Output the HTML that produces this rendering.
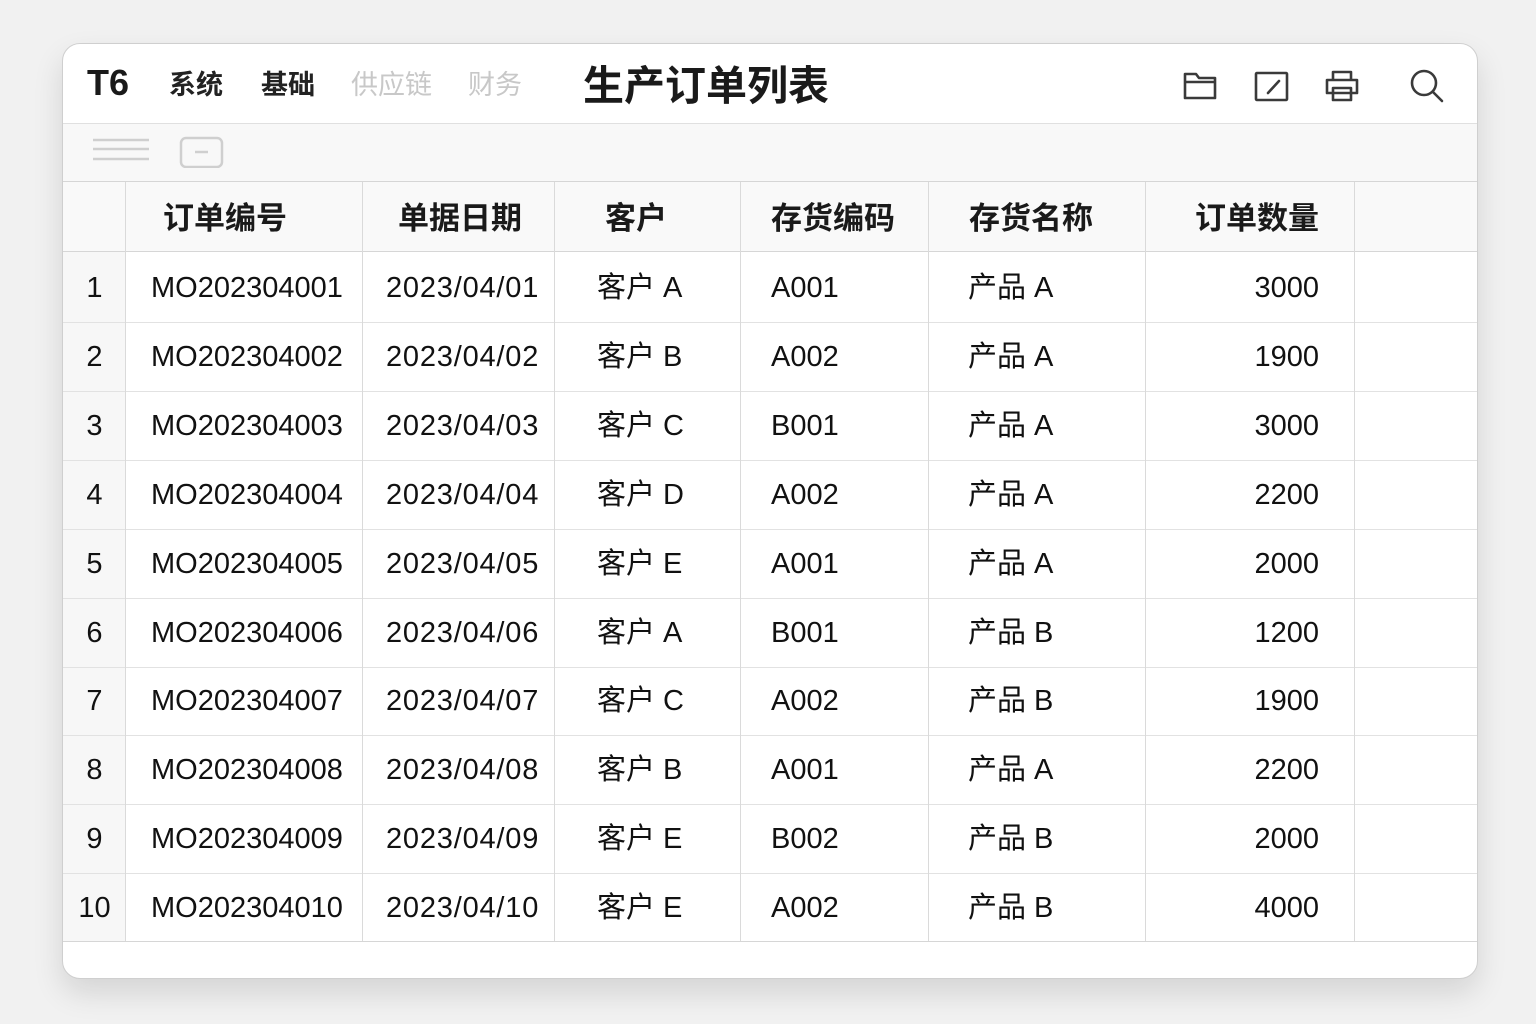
<!DOCTYPE html>
<html><head><meta charset="utf-8"><style>
body{margin:0;width:1536px;height:1024px;background:#f1f1f1;font-family:"Liberation Sans","Noto Sans CJK SC",sans-serif;position:relative;overflow:hidden}
.card{position:absolute;left:62px;top:43px;width:1414px;height:934px;background:#fff;border:1px solid #cfcfcf;border-radius:18px;box-shadow:0 14px 30px rgba(0,0,0,.12);overflow:hidden}
.a{position:absolute;white-space:nowrap}
.hl{position:absolute;left:0;width:1414px;height:1px;background:#d6d6d6}
.vl{position:absolute;width:1px;background:#dadada}
.c{position:absolute;font-size:29px;color:#111;line-height:34px;white-space:nowrap}
.h{position:absolute;font-size:31px;font-weight:bold;color:#1a1a1a;line-height:36px;white-space:nowrap}
</style></head><body>
<div class="card">
<div class="a" style="left:24px;top:18px;font-size:36px;font-weight:bold;color:#1a1a1a">T6</div>
<div class="a" style="left:106px;top:19px;font-size:27px;font-weight:bold;color:#222">系统</div>
<div class="a" style="left:198px;top:19px;font-size:27px;font-weight:bold;color:#222">基础</div>
<div class="a" style="left:288px;top:19px;font-size:27px;color:#c8c8c8">供应链</div>
<div class="a" style="left:405px;top:19px;font-size:27px;color:#c8c8c8">财务</div>
<div class="a" style="left:520px;top:8px;font-size:41px;font-weight:bold;color:#1a1a1a">生产订单列表</div>
<svg class="a" style="left:1118px;top:22px" width="300" height="40" viewBox="0 0 300 40" fill="none" stroke="#3a3a3a" stroke-width="2.6" stroke-linejoin="round" stroke-linecap="round">
<path d="M4 8h11l3 4h16v20H4z M4 16h30"/>
<rect x="75" y="7" width="31" height="27" rx="1"/><path d="M87 27l11-12"/>
<path d="M152 14V6h18v8 M146 14h30v13h-30z M152 22h18v12h-18z"/>
<circle cx="243" cy="17" r="12"/><path d="M252 26l9 9"/>
</svg>
<div class="hl" style="top:79px;background:#e0e0e0"></div>
<div class="a" style="left:0;top:80px;width:1414px;height:57px;background:#f8f8f8"></div>
<svg class="a" style="left:28px;top:92px" width="140" height="32" fill="none" stroke="#cfcfcf" stroke-width="2.5"><path d="M2 4h56M2 13h56M2 23h56"/><rect x="90" y="2" width="41" height="29" rx="5"/><path d="M104 16h13"/></svg>
<div class="hl" style="top:137px"></div>
<div class="a" style="left:0;top:138px;width:1414px;height:69px;background:#f9f9f9"></div>
<div class="a" style="left:0;top:207px;width:63px;height:690px;background:#f7f7f7"></div>
<div class="hl" style="top:207px"></div>
<div class="hl" style="top:278px;background:#e2e2e2"></div>
<div class="hl" style="top:347px;background:#e2e2e2"></div>
<div class="hl" style="top:416px;background:#e2e2e2"></div>
<div class="hl" style="top:485px;background:#e2e2e2"></div>
<div class="hl" style="top:554px;background:#e2e2e2"></div>
<div class="hl" style="top:623px;background:#e2e2e2"></div>
<div class="hl" style="top:691px;background:#e2e2e2"></div>
<div class="hl" style="top:760px;background:#e2e2e2"></div>
<div class="hl" style="top:829px;background:#e2e2e2"></div>
<div class="hl" style="top:897px"></div>
<div class="vl" style="left:62px;top:138px;height:759px"></div>
<div class="vl" style="left:299px;top:138px;height:759px"></div>
<div class="vl" style="left:491px;top:138px;height:759px"></div>
<div class="vl" style="left:677px;top:138px;height:759px"></div>
<div class="vl" style="left:865px;top:138px;height:759px"></div>
<div class="vl" style="left:1082px;top:138px;height:759px"></div>
<div class="vl" style="left:1291px;top:138px;height:759px"></div>
<div class="h" style="left:100px;top:157px">订单编号</div>
<div class="h" style="left:335px;top:157px">单据日期</div>
<div class="h" style="left:542px;top:157px">客户</div>
<div class="h" style="left:708px;top:157px">存货编码</div>
<div class="h" style="left:906px;top:157px">存货名称</div>
<div class="h" style="left:1132px;top:157px">订单数量</div>
<div id="rows"></div>
</div>
<script>
var d=[["MO202304001","2023/04/01","A","A001","A","3000"],["MO202304002","2023/04/02","B","A002","A","1900"],["MO202304003","2023/04/03","C","B001","A","3000"],["MO202304004","2023/04/04","D","A002","A","2200"],["MO202304005","2023/04/05","E","A001","A","2000"],["MO202304006","2023/04/06","A","B001","B","1200"],["MO202304007","2023/04/07","C","A002","B","1900"],["MO202304008","2023/04/08","B","A001","A","2200"],["MO202304009","2023/04/09","E","B002","B","2000"],["MO202304010","2023/04/10","E","A002","B","4000"]];
var h="";
d.forEach(function(r,i){var t=227+i*68.9;
h+='<div class="c" style="left:0;width:63px;text-align:center;top:'+t+'px">'+(i+1)+'</div>';
h+='<div class="c" style="left:88px;top:'+t+'px">'+r[0]+'</div>';
h+='<div class="c" style="left:323px;top:'+t+'px;letter-spacing:0.8px">'+r[1]+'</div>';
h+='<div class="c" style="left:534px;top:'+t+'px">客户 '+r[2]+'</div>';
h+='<div class="c" style="left:708px;top:'+t+'px">'+r[3]+'</div>';
h+='<div class="c" style="left:905px;top:'+t+'px">产品 '+r[4]+'</div>';
h+='<div class="c" style="left:1100px;width:156px;text-align:right;top:'+t+'px">'+r[5]+'</div>';});
document.getElementById("rows").outerHTML=h;
</script>
</body></html>
